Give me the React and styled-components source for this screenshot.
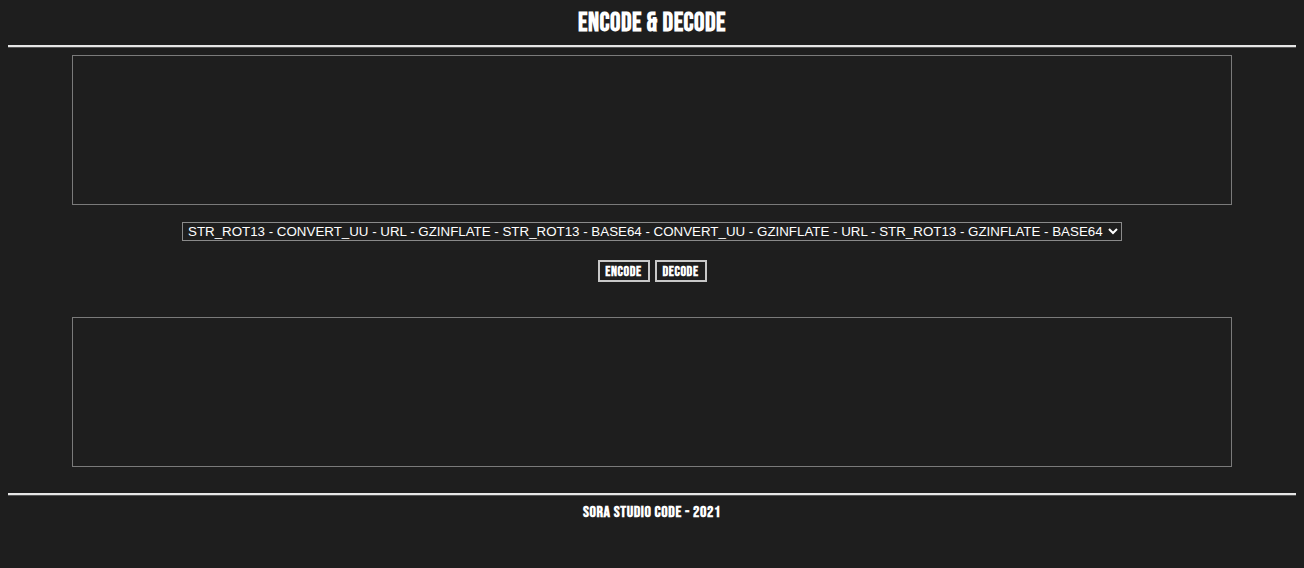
import React, { useState } from "react";
import styled, { createGlobalStyle } from "styled-components";

const Global = createGlobalStyle`
  html, body { background: #1e1e1e; }
  body { margin: 8px; color: #fff; font-family: "Liberation Sans", Arial, sans-serif; }
`;

const display = `"Bebas Neue", Oswald, "DejaVu Sans Condensed", "Liberation Sans Narrow", "Roboto Condensed", sans-serif`;

const Page = styled.div`
  display: flex;
  flex-direction: column;
  align-items: center;
`;

const Title = styled.h1`
  margin: 0;
  box-sizing: border-box;
  height: 37px;
  padding-top: 1px;
  display: flex;
  align-items: flex-start;
  justify-content: center;
  font-family: ${display};
  font-weight: 700;
  font-size: 26px;
  line-height: 30px;
  letter-spacing: 0.5px;
  color: #fff;
`;

const Rule = styled.div`
  align-self: stretch;
  height: 2px;
  background: #e6e6e6;
  border-bottom: 1px solid #555;
`;

const Area = styled.textarea`
  box-sizing: border-box;
  width: 1160px;
  height: 150px;
  margin-top: ${(p) => p.$top}px;
  background: #1e1e1e;
  border: 1px solid #7a7a7a;
  color: #fff;
  resize: none;
  outline: none;
  display: block;
`;

const Select = styled.select`
  box-sizing: border-box;
  width: 940px;
  height: 19px;
  margin-top: 17px;
  background: #1e1e1e;
  color: #fff;
  border: 1px solid #8a8a8a;
  border-radius: 0;
  font-family: "Liberation Sans", Arial, sans-serif;
  font-size: 13.33px;
  padding: 0 0 0 1px;
  color-scheme: dark;
`;

const Buttons = styled.div`
  display: flex;
  gap: 5px;
  margin-top: 19px;
`;

const Button = styled.button`
  box-sizing: border-box;
  width: 52px;
  height: 22px;
  background: #1e1e1e;
  color: #fff;
  border: 2px solid #c8c8c8;
  padding: 0;
  display: flex;
  align-items: center;
  justify-content: center;
  cursor: pointer;
`;

const ButtonText = styled.span`
  font-family: ${display};
  font-weight: 700;
  font-size: 14px;
  letter-spacing: 0.6px;
`;

const FooterRule = styled(Rule)`
  margin-top: 26px;
`;

const Footer = styled.footer`
  margin-top: 7px;
  font-family: ${display};
  font-weight: 700;
  font-size: 16px;
  letter-spacing: 0.6px;
`;

const options = [
  "STR_ROT13 - CONVERT_UU - URL - GZINFLATE - STR_ROT13 - BASE64 - CONVERT_UU - GZINFLATE - URL - STR_ROT13 - GZINFLATE - BASE64",
];

export default function App() {
  const [input, setInput] = useState("");
  const [output, setOutput] = useState("");
  return (
    <>
      <Global />
      <Page>
        <Title>ENCODE &amp; DECODE</Title>
        <Rule />
        <Area $top={7} value={input} onChange={(e) => setInput(e.target.value)} />
        <Select>
          {options.map((o) => (
            <option key={o}>{o}</option>
          ))}
        </Select>
        <Buttons>
          <Button><ButtonText>ENCODE</ButtonText></Button>
          <Button><ButtonText>DECODE</ButtonText></Button>
        </Buttons>
        <Area $top={35} value={output} onChange={(e) => setOutput(e.target.value)} />
        <FooterRule />
        <Footer>SORA STUDIO CODE - 2021</Footer>
      </Page>
    </>
  );
}
